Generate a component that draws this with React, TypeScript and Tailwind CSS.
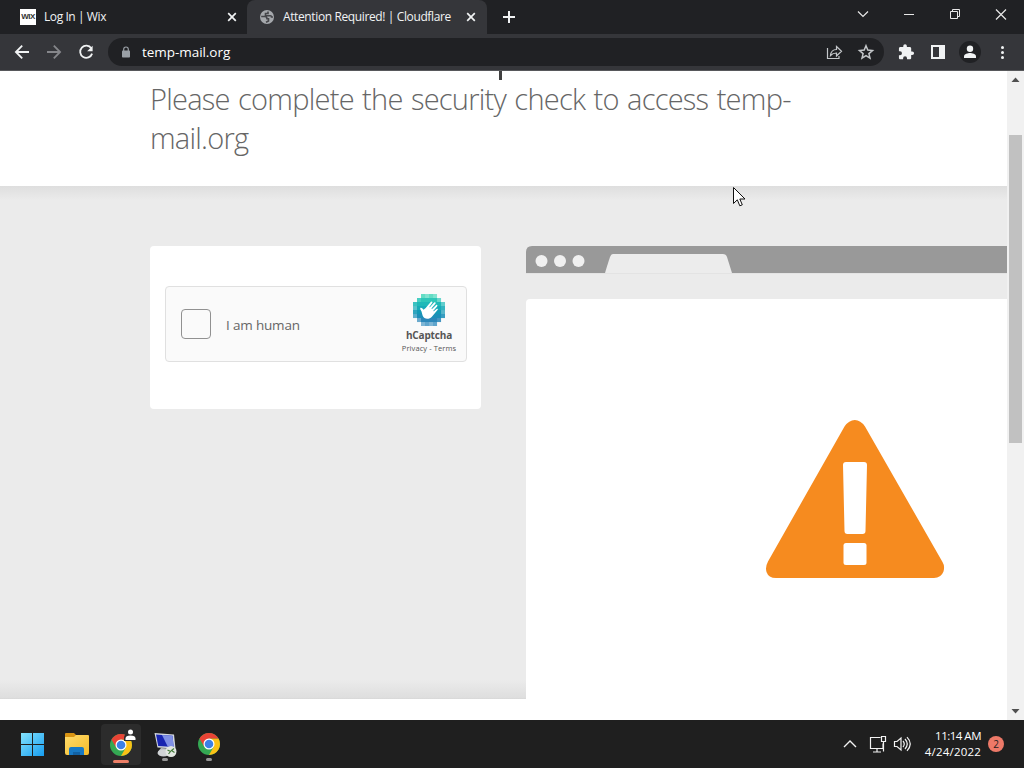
import React from "react";

const ui = "font-['Open_Sans','Noto_Sans',sans-serif]";

function TabClose() {
  return (
    <svg width="10" height="10" viewBox="0 0 10 10" stroke="#f1f3f4" strokeWidth="1.7" fill="none">
      <path d="M1.2 1.2 8.8 8.8M8.8 1.2 1.2 8.8" />
    </svg>
  );
}

function TabStrip() {
  return (
    <div className="flex h-[34px] bg-[#202124] text-[12px] text-[#f1f3f4]">
      <div className="flex w-[247px] items-center pl-5 pr-[10px]">
        <div className="flex size-4 items-center justify-center bg-white font-['Liberation_Sans',sans-serif] text-[8px] font-bold tracking-[-0.5px] text-[#333]">
          WIX
        </div>
        <span className="ml-2 grow whitespace-nowrap tracking-[-0.42px]">Log In | Wix</span>
        <TabClose />
      </div>
      <div className="flex w-[240px] items-center rounded-t-lg bg-[#35363a] pl-3 pr-[11px]">
        <svg width="16" height="16" viewBox="0 0 16 16">
          <circle cx="8" cy="8" r="7" fill="#a5a8ac" />
          <path
            d="M2.200 7.500h3.300q2.500 0 2.500 2.200h1.500v2.300L7 13.300M9 2.500v2H6.500v2.200h5q1 0 1 1.300h1.500"
            fill="none"
            stroke="#45464a"
            strokeWidth="1.600"
          />
        </svg>
        <span className="ml-[8px] grow whitespace-nowrap tracking-[-0.38px]">Attention Required! | Cloudflare</span>
        <TabClose />
      </div>
      <div className="flex w-11 items-center justify-center">
        <svg width="12" height="12" viewBox="0 0 12 12" stroke="#f1f3f4" strokeWidth="2">
          <path d="M6 0v12M0 6h12" />
        </svg>
      </div>
      <svg className="ml-auto h-[34px] w-[184px]" viewBox="840 0 184 34" fill="none" stroke="#e8e8e8" strokeWidth="1">
        <path d="m858 11.500 5 5 5-5" strokeWidth="1.200" />
        <path d="M904 14.500h10" />
        <path d="M950.500 11.500h7v7h-7zM952.500 11.500v-2h7v7h-2" />
        <path d="m996 9.500 10 10m0-10-10 10" strokeWidth="1.200" />
      </svg>
    </div>
  );
}

function Toolbar() {
  return (
    <div className="flex h-[37px] items-center border-b border-[#57585b] bg-[#35363a]">
      <svg width="108" height="36" viewBox="0 34 108 36" fill="none" stroke="#f1f3f4" strokeWidth="1.8">
        <path d="M29 52H16m6.200-6.300L15.900 52l6.300 6.300" />
        <path d="M47 52h13m-6.200-6.300L60.100 52l-6.300 6.300" stroke="#85868a" />
        <path d="M91.300 48.200A6.100 6.100 0 1 0 92.100 53.600" />
        <path d="M92.600 45.700v5.500h-5.500z" fill="#f1f3f4" stroke="none" />
      </svg>
      <div className="flex h-7 w-[776px] items-center rounded-full bg-[#202124] pl-[13px] pr-[9px]">
        <svg width="10" height="12" viewBox="0 0 10 12">
          <path d="M2.700 5V3.300a2.300 2.300 0 0 1 4.600 0V5" fill="none" stroke="#9aa0a6" strokeWidth="1.200" />
          <rect x="1" y="4.500" width="8" height="7" rx=".8" fill="#9aa0a6" />
        </svg>
        <span className="ml-[11px] grow text-[13.500px] tracking-[-0.05px] text-white">temp-mail.org</span>
        <svg width="52" height="20" viewBox="823 42 52 20" fill="none" stroke="#c4c7ca" strokeWidth="1.200">
          <path d="M827.500 48v10.500h11.500v-2.500" />
          <path d="M830.500 55.500c.4-4 2.700-6 6-6v-3l5 4.800-5 4.700v-3c-2.500 0-4.200.5-6 2.500z" />
          <path
            d="m866 45.800 1.800 4.300 4.700.4-3.600 3.100 1.100 4.600-4-2.500-4 2.500 1.100-4.600-3.600-3.100 4.700-.4z"
            strokeWidth="1.500"
          />
        </svg>
      </div>
      <svg width="140" height="36" viewBox="884 34 140 36" fill="#f1f3f4">
        <path
          transform="translate(897.500 43.500) scale(.72)"
          d="M20.500 11H19V7c0-1.100-.9-2-2-2h-4V3.500a2.500 2.500 0 0 0-5 0V5H4c-1.100 0-2 .9-2 2v3.800h1.500a2.700 2.700 0 0 1 0 5.400H2V20c0 1.100.9 2 2 2h3.800v-1.500a2.700 2.700 0 0 1 5.400 0V22H17c1.100 0 2-.9 2-2v-4h1.500a2.500 2.500 0 0 0 0-5z"
        />
        <path d="M931 45h14v14h-14zm2 2v10h6V47z" fillRule="evenodd" />
        <circle cx="970" cy="52" r="11" fill="#202124" />
        <circle cx="970" cy="48.800" r="3.200" />
        <path d="M964 58v-1.800c0-2.200 4-3.200 6-3.200s6 1 6 3.200V58z" />
        <circle cx="1002.500" cy="47.500" r="1.500" />
        <circle cx="1002.500" cy="52.500" r="1.500" />
        <circle cx="1002.500" cy="57.500" r="1.500" />
      </svg>
    </div>
  );
}

const logoColors = ["#4fd8bd", "#2fc7b9", "#20b9b8", "#18abb8", "#1399b5", "#1d8fb8", "#2c87b9", "#4a98c5"];
const logoSpans = [[2, 5], [1, 6], [0, 7], [0, 7], [0, 7], [0, 7], [1, 6], [2, 5]];

function CaptchaLogo() {
  return (
    <svg width="32" height="32" viewBox="0 0 32 32">
      {logoSpans.map(([a, b], y) =>
        Array.from({ length: b - a + 1 }, (_, i) => a + i).map((x) => (
          <rect
            key={`${x}-${y}`}
            x={x * 4}
            y={y * 4}
            width="4.050"
            height="4.050"
            fill={logoColors[y]}
            opacity={x === a || x === b || y === 0 || y === 7 ? ((x + y) % 2 ? 0.7 : 0.88) : 1}
          />
        )),
      )}
      <path
        fill="white"
        d="M8.500 17.500c-.9-1.800-1.800-3-1-3.700.8-.5 2 .4 3 2l2.200-1.900 5-5.800c1.200-1.200 2.300-.2 1.500 1l-2.900 3.800.5.300 4.300-4.600c1.100-1 2.200 0 1.300 1.200l-4 4.800.6.400 3.900-3.800c1.100-.9 2 .1 1.200 1.200l-3.900 4.500.5.300 2.900-2.300c1-.6 1.700.3.900 1.200l-5.200 6.100c-3.300 3.800-8.100 3.300-9.700-.7z"
      />
    </svg>
  );
}

function Captcha() {
  return (
    <div className="h-[163px] w-[331px] rounded-sm bg-white px-[15px] pt-10">
      <div className="flex h-[76px] w-[302px] items-center rounded border border-[#e0e0e0] bg-[#fafafa] pl-[15px] pr-[9px]">
        <div className="size-[30px] rounded border border-[#919191] bg-[#fafafa]" />
        <span className="ml-[15px] mt-[2px] grow text-[13.500px] tracking-[-0.18px] text-[#666]">I am human</span>
        <div className="flex w-[56px] flex-col items-center whitespace-nowrap text-[#555]">
          <CaptchaLogo />
          <span className="mt-[2px] text-[10px] font-bold leading-[14px] tracking-[-0.15px]">hCaptcha</span>
          <span className="text-[7.500px] leading-[12px] tracking-[0.1px]">Privacy - Terms</span>
        </div>
      </div>
    </div>
  );
}

function BrowserGraphic() {
  return (
    <div className="flex h-[474px] w-[481px] flex-col">
      <svg width="481" height="27" viewBox="526 246 481 27">
        <path d="M526 273v-21q0-6 6-6h475v27z" fill="#999" />
        <g fill="#f0f0f0">
          <circle cx="541.500" cy="261" r="6" />
          <circle cx="560" cy="261" r="6" />
          <circle cx="578.500" cy="261" r="6" />
        </g>
        <path d="M605 273q2-7 5-16 1-3 3-3h110q3 0 4 3l5 16z" fill="#ececec" />
      </svg>
      <div className="h-[26px] border-t border-[#e3e3e3] bg-[#ebebeb]" />
      <div className="grow rounded-tl-sm bg-white pl-[239px] pt-[120px]">
        <svg width="181" height="161" viewBox="765 419 181 161">
          <path
            d="M844.500 426.500Q849 420 854.800 420T865 426.500L942.500 562Q945 566 943.500 571.500 941 578 934 578H776Q768.500 578 766.500 572 765 567 768 561.500z"
            fill="#f68b1f"
          />
          <path d="M846 462h18q3 0 3 3l-1.500 66q0 3-3 3h-15q-3 0-3-3l-1.500-66q0-3 3-3z" fill="white" />
          <rect x="843.500" y="543" width="23" height="22" rx="2.500" fill="white" />
        </svg>
      </div>
    </div>
  );
}

function Scrollbar() {
  return (
    <div className="flex w-[17px] flex-col items-center bg-[#f1f1f1]">
      <svg width="17" height="64" viewBox="0 0 17 64">
        <path d="m4.500 11 4-4.500 4 4.500z" fill="#505050" />
      </svg>
      <div className="h-[308px] w-[13px] bg-[#c1c1c1]" />
      <svg className="mt-auto" width="17" height="17" viewBox="0 0 17 17">
        <path d="m4.500 6 4 4.500 4-4.500z" fill="#505050" />
      </svg>
    </div>
  );
}

function Page() {
  return (
    <div className="flex h-[649px] bg-white">
      <main className="flex w-[1007px] flex-col overflow-hidden">
        <header className="h-[115px] pl-[150px]">
          <div className="h-[8px] pl-[348.500px]">
            <div className="h-[9px] w-[3px] bg-[#404040]" />
          </div>
          <h2 className="w-[680px] whitespace-nowrap text-[29px] font-light leading-[39px] tracking-[-0.75px] text-[#666] [word-spacing:1.5px]">
            Please complete the security check to access temp-
            <br />
            mail.org
          </h2>
        </header>
        <section className="flex h-[513px] shrink-0 gap-[45px] bg-[linear-gradient(#dedede,#ebebeb_14px,#ebebeb_494px,#dedede_512px,#d5d5d5)] pl-[150px] pt-[60px]">
          <Captcha />
          <BrowserGraphic />
        </section>
      </main>
      <Scrollbar />
    </div>
  );
}

function ChromeIcon() {
  return (
    <svg width="24" height="24" viewBox="0 0 24 24">
      <circle cx="12" cy="12" r="11" fill="#34a853" />
      <path d="M12 6.500h9.526A11 11 0 0 1 12 23l4.763-8.250z" fill="#fbc116" />
      <path d="M7.237 14.750 2.474 6.500A11 11 0 0 1 21.526 6.500H12z" fill="#e94335" />
      <circle cx="12" cy="12" r="5.500" fill="#fff" />
      <circle cx="12" cy="12" r="4.300" fill="#3b80e8" />
    </svg>
  );
}

function Taskbar() {
  return (
    <footer className="flex h-12 items-center bg-[#1f1f1f] text-white">
      <svg width="98" height="48" viewBox="0 720 98 48">
        <defs>
          <linearGradient id="win" x1="21" y1="732" x2="44" y2="756" gradientUnits="userSpaceOnUse">
            <stop stopColor="#86e4fd" />
            <stop offset="1" stopColor="#169df0" />
          </linearGradient>
          <linearGradient id="folder" x1="0" y1="0" x2="1" y2="1">
            <stop stopColor="#ffdb6b" />
            <stop offset="1" stopColor="#f5bb29" />
          </linearGradient>
        </defs>
        <path d="M21 733h11v11H21zm12 0h11v11H33zM21 745h11v11H21zm12 0h11v11H33z" fill="url(#win)" />
        <path d="M65 734q0-1 1-1h8l3 3v5H65z" fill="#d99413" />
        <path d="M65 737h9l2-2h12q1 0 1 1v17q0 2-2 2H67q-2 0-2-2z" fill="url(#folder)" />
        <path d="M69 755v-6q0-2 2-2h11q2 0 2 2v6z" fill="#1879c4" />
        <path d="M73 755v-3h7v3z" fill="#1261a3" />
      </svg>
      <div className="relative ml-[3px] flex h-[41px] w-10 flex-col items-center rounded bg-[#2c2c2c] pt-[9px]">
        <ChromeIcon />
        <div className="mt-[3px] h-[3px] w-4 rounded-full bg-[#ed7f67]" />
        <svg className="absolute left-[23px] top-[5px]" width="13" height="12" viewBox="0 0 13 12">
          <path d="M0 12V9q0-4 4-5V1h6v4q3 1 3 4v3z" fill="#2c2c2c" />
          <circle cx="6.500" cy="3" r="2.500" fill="white" />
          <path d="M1.500 11V9.500q0-3 5-3t5 3V11z" fill="white" />
        </svg>
      </div>
      <div className="flex h-10 w-12 flex-col items-center pt-[7px]">
        <svg width="26" height="26" viewBox="152 730 26 26">
          <path d="m154.500 732 19.500 1.500 1.500 14-18-1z" fill="#d3d8dd" />
          <path d="m156 733.500 16.500 1.200 1.200 11.300-15.500-1z" fill="#1724b0" />
          <path d="m162 734 10.500.7 1.200 11.300-6-.4z" fill="#7f90e6" />
          <path d="m161 747 8 .5-1 3 3 3-13-1v-2z" fill="#b8bcc0" />
          <ellipse cx="163.500" cy="752" rx="6" ry="3.500" fill="#d0d3d5" />
          <circle cx="171" cy="750.500" r="5.500" fill="#e3e7e2" />
          <path d="m167.500 749 3 1.500-2 2.500m5.500-5.500-2.500 2 3 2" fill="none" stroke="#437b3a" strokeWidth="1.200" />
        </svg>
        <div className="mt-px h-[3px] w-[6px] rounded-full bg-[#999]" />
      </div>
      <div className="flex h-10 w-10 flex-col items-center pt-2">
        <ChromeIcon />
        <div className="mt-[2px] h-[3px] w-[6px] rounded-full bg-[#999]" />
      </div>
      <svg className="ml-auto" width="82" height="48" viewBox="836 720 82 48" fill="none" stroke="#f2f2f2" strokeWidth="1.200">
        <path d="m844 747 6-6 6 6" strokeWidth="1.400" />
        <path d="M880.500 737.500h-10v11h12.500v-5M877 749v3m-4 0h8M881.500 736.500h4v5h-4zM883.500 742v9.500" />
        <path d="M894.500 741.500h2.500l4-3.500v12l-4-3.500h-2.500zM903 741q2.500 3 0 6M905 739q4.500 5 0 10M907 737.200q6.500 6.800 0 13.600" />
      </svg>
      <div className="flex w-[63px] flex-col items-end whitespace-nowrap text-[11.500px] leading-[16px]">
        <span className="tracking-[-0.500px]">11:14 AM</span>
        <span className="tracking-[0.200px]">4/24/2022</span>
      </div>
      <div className="ml-[7px] mr-5 flex size-4 items-center justify-center rounded-full bg-[#ed7968] text-[10px] text-[#26201f]">
        2
      </div>
    </footer>
  );
}

export default function App() {
  return (
    <div className={`relative h-[768px] w-[1024px] overflow-hidden ${ui}`}>
      <TabStrip />
      <Toolbar />
      <Page />
      <Taskbar />
      <svg className="absolute left-[733px] top-[187px]" width="13" height="21" viewBox="0 0 13 21">
        <path d="M.5.500v16l3.800-3.700 2.500 6 2.500-1-2.500-5.800h5.200z" fill="white" stroke="#111" strokeWidth="1" />
      </svg>
    </div>
  );
}
